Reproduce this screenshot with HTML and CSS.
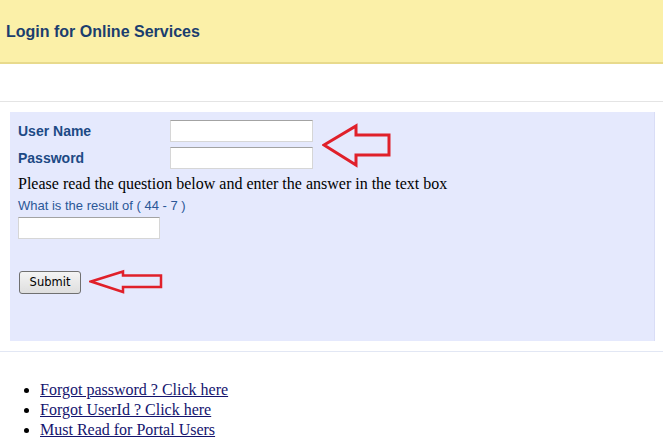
FILE: index.html
```html
<!DOCTYPE html>
<html lang="en">
<head>
    <meta charset="UTF-8">
    <title>Login for Online Services</title>
    <link rel="stylesheet" href="styles.css">
</head>
<body>
    <div class="page">
        <div class="header">
            <h1>Login for Online Services</h1>
        </div>

        <div class="divider"></div>

        <form class="login-box" onsubmit="return false;">
            <div class="login-grid">
                <label for="userName">User Name</label>
                <input type="text" id="userName">
                <svg class="arrow arrow-big" width="70" height="45" viewBox="0 0 70 45">
                    <polygon points="2,22 34,3 34,12 67,12 67,32 34,32 34,42" fill="none" stroke="#e0202a" stroke-width="3" stroke-linejoin="miter"/>
                </svg>
                <label for="password">Password</label>
                <input type="password" id="password">
            </div>

            <p class="hint">Please read the question below and enter the answer in the text box</p>
            <p class="question">What is the result of ( 44 - 7 )</p>
            <input type="text" class="answer">

            <div class="submit-row">
                <button type="submit">Submit</button>
                <svg class="arrow" width="75" height="26" viewBox="0 0 75 26">
                    <polygon points="2,12.5 34,2.5 34,6.5 72,6.5 72,18 34,18 34,23" fill="none" stroke="#e0202a" stroke-width="2.5"/>
                </svg>
            </div>
        </form>

        <div class="divider divider-blue"></div>

        <ul class="links">
            <li><a href="#">Forgot password ? Click here</a></li>
            <li><a href="#">Forgot UserId ? Click here</a></li>
            <li><a href="#">Must Read for Portal Users</a></li>
        </ul>
    </div>
</body>
</html>
```

FILE: styles.css
```css
body {
    margin: 0;
    padding: 0;
    background-color: #ffffff;
    font-family: "Liberation Serif", "Times New Roman", serif;
    font-size: 16px;
    color: #000;
}

.page {
    width: 663px;
}

.header {
    box-sizing: border-box;
    height: 64px;
    background-color: #fbf0a8;
    border-bottom: 2px solid #e8da8c;
    display: flex;
    align-items: center;
    padding: 2px 0 0 6px;
}

.header h1 {
    margin: 0;
    font-family: "Liberation Sans", Arial, sans-serif;
    font-size: 16px;
    font-weight: bold;
    color: #1b3e6e;
}

.divider {
    height: 1px;
    background-color: #e4e4e4;
    margin-top: 37px;
}

.divider-blue {
    background-color: #e2e7f4;
    margin-top: 10px;
}

.login-box {
    margin: 10px 0 0 10px;
    width: 636px;
    padding: 8px 0 46px 8px;
    background-color: #e5e9fd;
    border-right: 1px solid #d9ddf6;
}

.login-grid {
    display: grid;
    grid-template-columns: 152px 143px auto;
    grid-template-rows: 22px 22px;
    row-gap: 5px;
    align-items: center;
}

.login-grid label {
    font-family: "Liberation Sans", Arial, sans-serif;
    font-size: 14px;
    font-weight: bold;
    color: #1d4a85;
}

input {
    box-sizing: border-box;
    height: 22px;
    margin: 0;
    padding: 2px;
    background-color: #fff;
    border: 1px solid #d6d6d6;
    border-top-color: #a3a3a3;
    font-size: 13px;
}

.login-grid input {
    width: 143px;
}

.arrow {
    display: block;
}

.arrow-big {
    grid-row: 1 / 3;
    grid-column: 3;
    margin-left: 9px;
    margin-top: 2px;
}

.hint {
    margin: 6px 0 0 0;
    line-height: 18px;
}

.question {
    margin: 5px 0 0 0;
    font-family: "Liberation Sans", Arial, sans-serif;
    font-size: 13px;
    line-height: 16px;
    color: #2b5797;
}

.answer {
    width: 142px;
    margin-top: 3px;
    display: block;
}

.submit-row {
    display: flex;
    align-items: center;
    gap: 8px;
    margin-top: 30px;
    margin-left: 1px;
}

button {
    box-sizing: border-box;
    width: 62px;
    height: 23px;
    padding: 0;
    font-family: "DejaVu Sans", Tahoma, sans-serif;
    font-size: 11.5px;
    color: #000;
    background: linear-gradient(#f4f4f4, #dedede);
    border: 1px solid #707070;
    border-radius: 3px;
    cursor: pointer;
}

.links {
    margin: 28px 0 0 0;
    padding-left: 40px;
    line-height: 20px;
}

.links a {
    color: #14146e;
}
```
